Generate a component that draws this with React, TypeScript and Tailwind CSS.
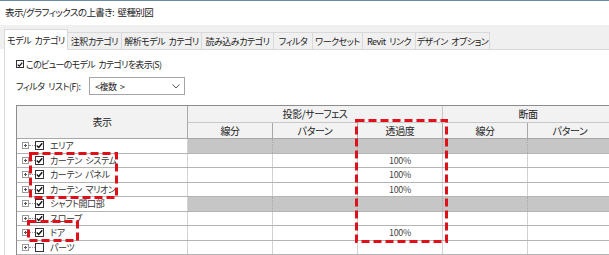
import { FC } from 'react';

interface CategoryRow {
  name: string;
  checked: boolean;
  gray?: boolean;
  transparency?: string;
}

const rows: CategoryRow[] = [
  { name: 'エリア', checked: true, gray: true },
  { name: 'カーテン システム', checked: true, transparency: '100%' },
  { name: 'カーテン パネル', checked: true, transparency: '100%' },
  { name: 'カーテン マリオン', checked: true, transparency: '100%' },
  { name: 'シャフト開口部', checked: true, gray: true },
  { name: 'スロープ', checked: true },
  { name: 'ドア', checked: true, transparency: '100%' },
  { name: 'パーツ', checked: false },
];

const tabs = [
  { label: '注釈カテゴリ', w: 'w-[54px]' },
  { label: '解析モデル カテゴリ', w: 'w-[80px]' },
  { label: '読み込みカテゴリ', w: 'w-[72px]' },
  { label: 'フィルタ', w: 'w-[39px]' },
  { label: 'ワークセット', w: 'w-[50px]' },
  { label: 'Revit リンク', w: 'w-[53px]' },
  { label: 'デザイン オプション', w: 'w-[74px]' },
];

const CheckBox: FC<{ checked: boolean; size?: string }> = ({ checked, size = 'w-[9px] h-[9px]' }) => (
  <div className={`${size} border border-[#333] bg-white flex items-center justify-center shrink-0`}>
    {checked && (
      <svg width="7" height="7" viewBox="0 0 7 7">
        <path d="M0.8 3.6 L2.7 5.5 L6.2 1.2" stroke="#111" strokeWidth="1.4" fill="none" />
      </svg>
    )}
  </div>
);

const PlusBox: FC = () => (
  <div className="w-[7px] h-[7px] border border-[#9a9a9a] bg-white relative shrink-0">
    <div className="absolute left-[1px] top-[2px] w-[3px] h-px bg-[#555]" />
    <div className="absolute left-[2px] top-[1px] w-px h-[3px] bg-[#555]" />
  </div>
);

const DataCell: FC<{ gray?: boolean; children?: React.ReactNode }> = ({ gray, children }) => (
  <div
    className={`w-[85px] h-full flex items-center justify-center text-[9px] tracking-[-0.3px] text-[#444] border-r ${
      gray ? 'bg-[#c6c6c6] border-[#a8a8a8] border-dotted' : 'border-[#d2d2d2]'
    }`}
  >
    {children}
  </div>
);

export default function App() {
  return (
    <div className="w-[609px] h-[255px] overflow-hidden bg-white relative text-[#222] font-['Noto_Sans_CJK_JP','Noto_Sans',sans-serif] [font-feature-settings:'palt'] text-[9px] tracking-[-0.5px] [word-spacing:2px] leading-none">
      <div className="h-px bg-[#6d8aa3]" />
      <div className="h-[24px] flex items-center pl-[5px] text-[9.5px] tracking-[-0.6px] bg-white">
        表示/グラフィックスの上書き: 壁種別図
      </div>

      <div className="bg-[#f0f0f0] pl-[4px] pt-[4px] flex items-end h-[24px]">
        <div className="w-[64px] h-[21px] bg-white border border-b-0 border-[#d9d9d9] flex items-center justify-center relative top-px z-10 whitespace-nowrap">
          モデル カテゴリ
        </div>
        {tabs.map((t) => (
          <div
            key={t.label}
            className={`${t.w} h-[17px] bg-[#f0f0f0] border border-l-0 border-b-0 border-[#d9d9d9] flex items-center justify-center whitespace-nowrap`}
          >
            {t.label}
          </div>
        ))}
      </div>

      <div className="ml-[4px] border-t border-l border-[#d9d9d9] bg-white h-[206px]">
        <div className="flex items-center gap-[2px] pl-[11px] pt-[7px] h-[21px]">
          <CheckBox checked size="w-[8px] h-[8px]" />
          <span className="whitespace-nowrap tracking-[-0.7px]">このビューのモデル カテゴリを表示(S)</span>
        </div>

        <div className="flex items-center pl-[11px] mt-[6px] h-[18px]">
          <span className="w-[73px] whitespace-nowrap">フィルタ リスト(F):</span>
          <div className="w-[96px] h-[18px] border border-[#a5a5a5] bg-white flex items-center justify-between pl-[5px] pr-[4px]">
            <span>&lt;複数 &gt;</span>
            <svg width="8" height="5" viewBox="0 0 8 5">
              <path d="M0.5 0.5 L4 4 L7.5 0.5" stroke="#555" strokeWidth="1" fill="none" />
            </svg>
          </div>
        </div>

        <div className="ml-[11px] mt-[10px] w-[620px] border-l border-t border-[#8c8c8c] text-[10px] tracking-[-0.4px]">
          <div className="flex bg-[#f2f2f2]">
            <div className="w-[171px] h-[33px] border-r border-b border-[#a8a8a8] flex items-center justify-center">
              表示
            </div>
            <div className="flex flex-col">
              <div className="flex">
                <div className="w-[255px] h-[17px] border-r border-b border-[#c8c8c8] flex items-center justify-center">
                  投影/サーフェス
                </div>
                <div className="w-[170px] h-[17px] border-b border-[#c8c8c8] flex items-center justify-center">
                  断面
                </div>
              </div>
              <div className="flex">
                {['線分', 'パターン', '透過度', '線分', 'パターン'].map((h, i) => (
                  <div
                    key={i}
                    className="w-[85px] h-[16px] border-r border-b border-[#a8a8a8] flex items-center justify-center"
                  >
                    {h}
                  </div>
                ))}
              </div>
            </div>
          </div>

          {rows.map((r) => (
            <div key={r.name} className="flex h-[14.5px] border-b border-[#b4b4b4]">
              <div className="w-[171px] h-full border-r border-[#d2d2d2] flex items-center pl-[5px]">
                <PlusBox />
                <div className="w-[6px] border-t border-dotted border-[#999]" />
                <CheckBox checked={r.checked} />
                <span className="ml-[6px] whitespace-nowrap text-[9px] tracking-[-0.4px] text-[#333]">{r.name}</span>
              </div>
              <DataCell gray={r.gray} />
              <DataCell gray={r.gray} />
              <DataCell gray={r.gray}>{r.transparency}</DataCell>
              <DataCell gray={r.gray} />
              <DataCell gray={r.gray} />
            </div>
          ))}
        </div>
      </div>

      <svg className="absolute inset-0 pointer-events-none" width="609" height="255">
        <g fill="none" stroke="#e0101a" strokeWidth="3" strokeDasharray="8 4">
          <rect x="30.5" y="153.5" width="86" height="44" />
          <rect x="28.5" y="221.5" width="49" height="19" />
          <rect x="356.5" y="120.5" width="90" height="121" />
        </g>
      </svg>
    </div>
  );
}
